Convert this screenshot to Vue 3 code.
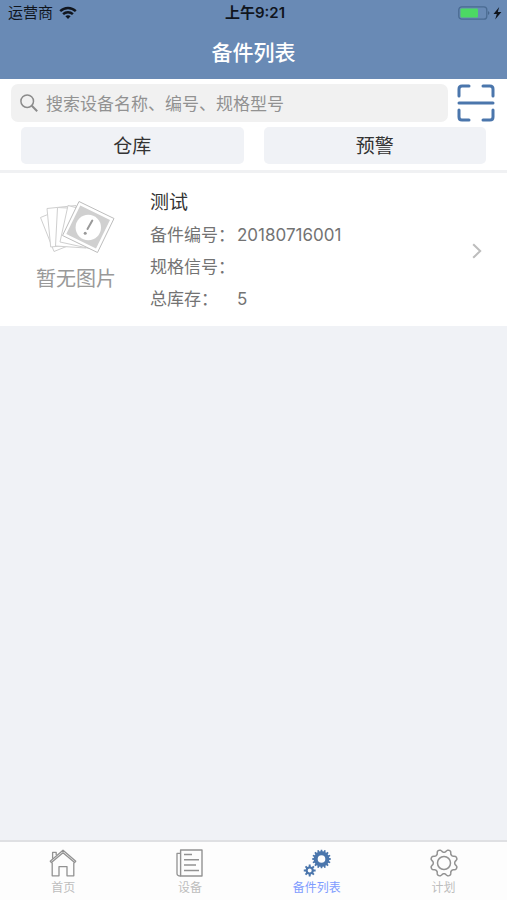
<template>
    <div class="pagina">
        <header class="topo">
            <div class="status">
                <div class="operadora">
                    <span>运营商</span>
                    <svg width="18" height="14" viewBox="0 0 18 14" fill="none" stroke="#10151d" stroke-width="2.4">
                        <path d="M1.2 5.2C5.6 .9 12.4 .9 16.8 5.2" />
                        <path d="M4.1 8.2C6.9 5.5 11.1 5.5 13.9 8.2" />
                        <path d="M6.4 10.2C7.9 8.8 10.1 8.8 11.6 10.2L9 12.9Z" fill="#10151d" stroke="none" />
                    </svg>
                </div>
                <time>上午9:21</time>
                <div class="bateria">
                    <svg width="44" height="16" viewBox="0 0 44 16">
                        <rect x="0.8" y="1.8" width="28" height="12.4" rx="3" fill="none" stroke="#4a6b92" stroke-width="1.3" />
                        <rect x="2.5" y="3.5" width="17.5" height="9" rx="1" fill="#4cd964" />
                        <path d="M30.2 6Q32.6 8 30.2 10Z" fill="#405f82" />
                        <path d="M41.2 2L35.5 8.9H38.8L37.2 14.4L43.4 7.1H39.8Z" fill="#10151d" />
                    </svg>
                </div>
            </div>
            <h1>备件列表</h1>
        </header>

        <section class="filtros">
            <div class="busca">
                <label class="campo" for="busca">
                    <svg width="18" height="18" viewBox="0 0 18 18" fill="none" stroke="#8b8b8b" stroke-width="1.5">
                        <circle cx="7.2" cy="7.2" r="6.3" />
                        <path d="M11.8 11.8L17.2 17.2" stroke-width="2" />
                    </svg>
                    <input id="busca" v-model="busca" type="search" placeholder="搜索设备名称、编号、规格型号" aria-label="搜索">
                </label>
                <button class="escanear" type="button" aria-label="扫描">
                    <svg width="38" height="38" viewBox="0 0 38 38" fill="none" stroke="#4b76ac" stroke-width="3" stroke-linecap="round">
                        <path d="M2 12V5Q2 2 5 2H12M26 2H33Q36 2 36 5V12M36 26V33Q36 36 33 36H26M12 36H5Q2 36 2 33V26M2 19H36" />
                    </svg>
                </button>
            </div>
            <div class="botoes">
                <button type="button">仓库</button>
                <button type="button">预警</button>
            </div>
        </section>

        <main>
            <a v-for="peca in pecas" :key="peca.codigo" class="peca" href="#">
                <div class="imagem">
                    <svg width="78" height="54" viewBox="0 0 78 54" fill="#fff" stroke="#cfcfcf" stroke-width="1">
                        <path d="M2.5 17.5L28 7L42 41L16 51.5Z" />
                        <path d="M9 8.5L38 5.5L42 44L12.7 47Z" />
                        <path d="M19.5 7.5L50 9L48 48L17.5 46Z" />
                        <path d="M30 5.5L62 14L54 49L22 42Z" />
                        <path d="M41 1.5L76 18.5L59.5 52.5L24.5 35.5Z" stroke="#bdbdbd" />
                        <path d="M42.3 5.5L72 20L58 48.5L28.3 34Z" fill="#d0d0d0" stroke="none" />
                        <circle cx="50.3" cy="27.5" r="12.7" stroke="none" />
                        <path d="M54.3 20.5L49.5 29" stroke="#999" stroke-width="2" stroke-linecap="round" />
                        <circle cx="47.2" cy="33.2" r="1.5" fill="#999" stroke="none" />
                    </svg>
                    <span>暂无图片</span>
                </div>
                <div class="dados">
                    <h2>{{ peca.nome }}</h2>
                    <dl>
                        <div><dt>备件编号：</dt><dd>{{ peca.codigo }}</dd></div>
                        <div><dt>规格信号：</dt><dd>{{ peca.modelo }}</dd></div>
                        <div><dt>总库存：</dt><dd>{{ peca.estoque }}</dd></div>
                    </dl>
                </div>
                <svg class="seta" width="10" height="16" viewBox="0 0 10 16" fill="none" stroke="#bdbdbd" stroke-width="2">
                    <path d="M1.2 1.2L8.2 8L1.2 14.8" />
                </svg>
            </a>
        </main>

        <nav class="abas">
            <a v-for="aba in abas" :key="aba.id" href="#" :class="{ ativa: aba.id === abaAtual }" @click.prevent="abaAtual = aba.id">
                <svg width="28" height="28" viewBox="0 0 28 28" fill="none" stroke="#929292" stroke-width="1.3" stroke-linejoin="round">
                    <template v-if="aba.id === 'inicio'">
                        <path d="M1.2 12.2L14 1.2L26.8 12.2L25.6 13.6L14 3.8L2.4 13.6Z" />
                        <path d="M3.6 9.7V3.4H7.2V6" />
                        <path d="M3.2 13.4V26.8H10V17.6H18V26.8H24.8V13.4" />
                    </template>
                    <template v-else-if="aba.id === 'equipamentos'">
                        <path d="M4.6 1H26V27H4.6Z" stroke-width="1.4" />
                        <path d="M4.6 4.4H1V24.5Q1 27 4.6 27" />
                        <path d="M8 5.5H16M8 10.8H23M8 16H20M8 21.5H23" stroke-width="1.5" />
                    </template>
                    <g v-else-if="aba.id === 'pecas'" fill="#4b76ac" fill-rule="evenodd" stroke="none">
                        <path :d="engrenagem(18.5, 10, 9.4, 7.8, 16, 3.8)" />
                        <path :d="engrenagem(6.7, 21.5, 6, 4.2, 8, 2)" />
                    </g>
                    <template v-else>
                        <path :d="contorno" stroke-width="1.5" />
                        <circle cx="14" cy="14" r="6.5" stroke-width="1.5" />
                    </template>
                </svg>
                <span>{{ aba.texto }}</span>
            </a>
        </nav>
    </div>
</template>

<script setup>
import { ref } from 'vue';

const busca = ref('');
const abaAtual = ref('pecas');

const pecas = [
    { nome: '测试', codigo: '20180716001', modelo: '', estoque: 5 },
];

const abas = [
    { id: 'inicio', texto: '首页' },
    { id: 'equipamentos', texto: '设备' },
    { id: 'pecas', texto: '备件列表' },
    { id: 'plano', texto: '计划' },
];

const ponto = (cx, cy, raio, angulo) =>
    `${(cx + raio * Math.cos(angulo)).toFixed(2)} ${(cy + raio * Math.sin(angulo)).toFixed(2)}`;

// dentes retos com um furo no centro
const engrenagem = (cx, cy, externo, interno, dentes, furo) => {
    const passo = (Math.PI * 2) / dentes;
    const pontos = [];
    for (let i = 0; i < dentes; i++) {
        const a = i * passo;
        pontos.push(ponto(cx, cy, interno, a - passo * 0.32));
        pontos.push(ponto(cx, cy, externo, a - passo * 0.2));
        pontos.push(ponto(cx, cy, externo, a + passo * 0.2));
        pontos.push(ponto(cx, cy, interno, a + passo * 0.32));
    }
    return `M${pontos.join('L')}ZM${cx - furo} ${cy}a${furo} ${furo} 0 1 0 ${furo * 2} 0a${furo} ${furo} 0 1 0 ${-furo * 2} 0Z`;
};

// oito dentes arredondados
const pontosContorno = [];
for (let i = 0; i < 96; i++) {
    const a = (i * Math.PI * 2) / 96;
    const onda = Math.tanh(1.5 * Math.cos(8 * (a - Math.PI / 8)));
    pontosContorno.push(ponto(14, 14, 12.2 + 1.6 * onda, a));
}
const contorno = `M${pontosContorno.join('L')}Z`;
</script>

<style>
body {
    margin: 0;
    background-color: #f0f2f6;
}
</style>

<style scoped>
.pagina {
    display: flex;
    flex-direction: column;
    min-height: 100vh;
    font-family: Inter, "Noto Sans CJK SC", sans-serif;
    color: #333;
}

.topo {
    height: 79px;
    background-color: #698ab5;
}

.status {
    display: grid;
    grid-template-columns: 1fr auto 1fr;
    align-items: center;
    height: 26px;
    padding: 0 5px 0 8px;
    font-size: 15px;
    line-height: 20px;
    color: #10151d;
}

.status time {
    font-weight: 600;
}

.operadora {
    display: flex;
    align-items: center;
    gap: 6px;
}

.bateria {
    display: flex;
    justify-content: flex-end;
}

h1 {
    margin: 0;
    font-size: 21px;
    line-height: 54px;
    font-weight: 500;
    text-align: center;
    color: #fff;
}

.filtros {
    padding: 5px 12px 6px 11px;
    background-color: #fff;
    border-bottom: 3px solid #f0f1f3;
}

.busca {
    display: flex;
    align-items: center;
    gap: 9px;
}

.campo {
    display: flex;
    flex: 1;
    align-items: center;
    gap: 8px;
    height: 38px;
    padding: 0 9px;
    border-radius: 7px;
    background-color: #f1f1f1;
}

.campo input {
    flex: 1;
    min-width: 0;
    padding: 2px 0 0;
    border: 0;
    outline: 0;
    background: none;
    font-family: inherit;
    font-size: 17px;
    color: #333;
}

.campo input::placeholder {
    color: #929292;
}

button {
    padding: 0;
    border: 0;
    font-family: inherit;
    cursor: pointer;
}

.escanear {
    display: flex;
    background: none;
}

.botoes {
    display: flex;
    gap: 20px;
    padding: 5px 9px 0 10px;
}

.botoes button {
    flex: 1;
    height: 37px;
    padding-top: 3px;
    border-radius: 5px;
    background-color: #f0f2f6;
    font-size: 19px;
    line-height: 34px;
    color: #333;
}

main {
    flex: 1;
}

.peca {
    display: flex;
    align-items: center;
    padding: 14px 25px 11px 36px;
    background-color: #fff;
    color: inherit;
    text-decoration: none;
}

.imagem {
    display: flex;
    flex-direction: column;
    align-items: flex-end;
    gap: 10px;
    width: 80px;
    margin-right: 34px;
    padding-bottom: 8px;
    font-size: 20px;
    line-height: 30px;
    color: #999;
}

.dados {
    flex: 1;
}

h2 {
    margin: 0;
    font-size: 19px;
    line-height: 32px;
    font-weight: 400;
}

dl {
    margin: 0;
    font-size: 17px;
    line-height: 32px;
    color: #737373;
}

dl div {
    display: flex;
    min-height: 32px;
}

dt {
    width: 87px;
}

dd {
    margin: 0;
}

.abas {
    display: flex;
    height: 58px;
    border-top: 2px solid #dfe0e3;
    background-color: #fdfdfd;
}

.abas a {
    display: flex;
    flex: 1;
    flex-direction: column;
    align-items: center;
    padding-top: 7px;
    font-size: 12px;
    line-height: 22px;
    color: #bdbdbd;
    text-decoration: none;
}

.abas a.ativa {
    color: #7f9cff;
}
</style>
